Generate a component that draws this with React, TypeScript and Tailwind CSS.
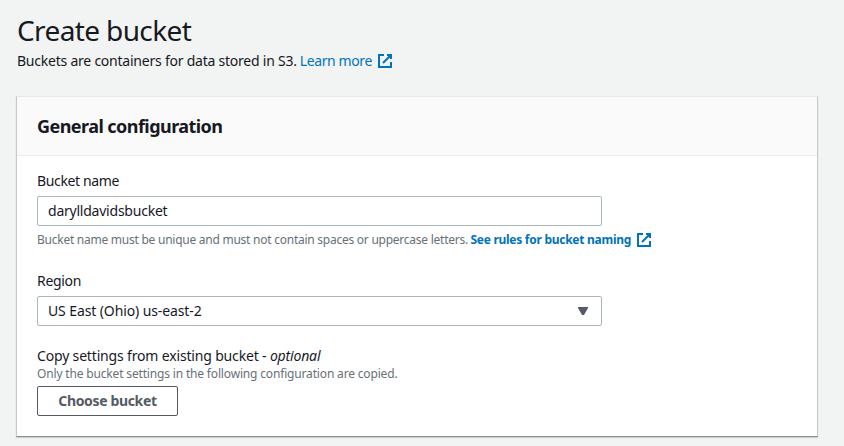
const Ext = ({ className = "" }: { className?: string }) => (
  <svg viewBox="0 0 16 16" className={`size-4 shrink-0 fill-none stroke-[#0073bb] stroke-2 ${className}`}>
    <path d="M10 2h4v4M6 10l8-8M14 9.048V14H2V2h5" />
  </svg>
);

export default function App() {
  return (
    <main className="h-[446px] w-[844px] overflow-hidden bg-[#f2f3f3] pl-4 pt-3 font-['Noto_Sans',sans-serif] text-[14px] leading-[22px] tracking-[-0.23px] text-[#16191f]">
      <header className="h-[84px] pl-px">
        <h1 className="text-[28px] leading-9 tracking-[-0.62px]">Create bucket</h1>
        <p className="mt-[2px] flex items-center">
          <span>Buckets are containers for data stored in S3.</span>
          <a className="ml-[3px] flex items-center tracking-[-0.4px] text-[#0073bb]">Learn more<Ext className="ml-[5px]" /></a>
        </p>
      </header>
      <section className="h-[341px] w-[802px] border border-x-[#c3cacb] border-t-[#e5e9e9] border-b-[#7f8c91] bg-white shadow-[0_1px_1px_0_rgba(0,28,36,0.15)]">
        <div className="flex h-[59px] items-center border-b border-[#eaeded] bg-[#fafafa] pb-px pl-5">
          <h2 className="text-[18px] font-bold leading-[22px] tracking-[-0.55px]">General configuration</h2>
        </div>
        <div className="px-5 pt-[14px]">
          <div className="h-[100px]">
            <label className="block tracking-[-0.36px]">Bucket name</label>
            <div className="mt-1 flex h-[30px] w-[565px] items-center rounded-[2px] border border-[#aab7b8] pl-[10px]">darylldavidsbucket</div>
            <p className="mt-[3px] flex items-center text-[12px] tracking-[-0.25px] text-[#687078]">
              <span>Bucket name must be unique and must not contain spaces or uppercase letters.</span>
              <a className="ml-[2.5px] flex items-center font-bold tracking-[-0.27px] text-[#0073bb]">See rules for bucket naming<Ext className="ml-[4.5px]" /></a>
            </p>
          </div>
          <div className="h-[75px]">
            <label className="block tracking-[-0.33px]">Region</label>
            <div className="mt-1 flex h-[30px] w-[565px] items-center justify-between rounded-[2px] border border-[#aab7b8] pl-[10px] pr-[13px]">
              <span className="tracking-[-0.11px]">US East (Ohio) us-east-2</span>
              <svg viewBox="0 0 10 8" className="h-2 w-[10px] fill-[#545b64]"><path d="M0 0h10v1L6 8H4L0 1z" /></svg>
            </div>
          </div>
          <p className="tracking-[-0.165px]">Copy settings from existing bucket - <i>optional</i></p>
          <p className="-mt-px text-[12px] leading-4 tracking-[-0.165px] text-[#687078]">Only the bucket settings in the following configuration are copied.</p>
          <button className="mt-1 flex h-[30px] w-[141px] items-center justify-center rounded-[2px] border border-[#545b64] font-bold tracking-[-0.35px] text-[#545b64]">Choose bucket</button>
        </div>
      </section>
    </main>
  );
}
